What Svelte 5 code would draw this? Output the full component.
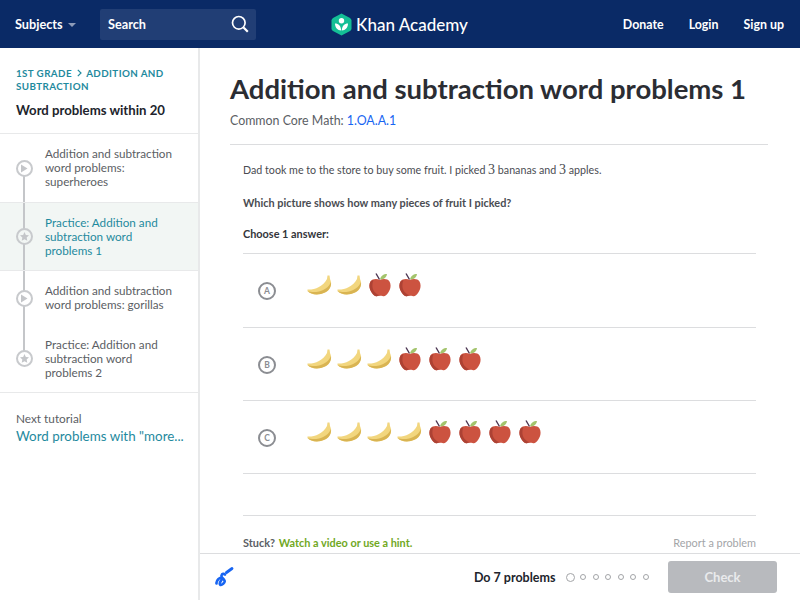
<script lang="ts">
  const lessons = [
    { kind: "video", lines: "Addition and subtraction word problems: superheroes", h: 68 },
    { kind: "star", lines: "Practice: Addition and subtraction word problems 1", h: 69, active: true },
    { kind: "video", lines: "Addition and subtraction word problems: gorillas", h: 54 },
    { kind: "star", lines: "Practice: Addition and subtraction word problems 2", h: 67 },
  ];
  const choices = [
    { letter: "A", bananas: 2, apples: 2 },
    { letter: "B", bananas: 3, apples: 3 },
    { letter: "C", bananas: 4, apples: 4 },
  ];
  const dots = [0, 1, 2, 3, 4, 5, 6];
</script>

{#snippet banana()}
  <span class="cell">
    <svg width="25" height="20" viewBox="0 0 25 20">
      <path d="M.5 14.500C7 15 16 12 20 4L20.500 .5 22.500 .5 23 4C25.500 9 23.500 15 18 17.500 12 20.500 4 20 .5 16z" fill="#f2d67e" />
      <path d="M.5 16C4 20 12 20.500 18 17.500 22.500 15.500 24.500 11 24 7 22 12 17 15.500 12 16.500 7.500 17.500 3.500 17 .5 16z" fill="#d9b452" />
    </svg>
  </span>
{/snippet}

{#snippet apple()}
  <span class="cell">
    <svg class="apple" width="22" height="24" viewBox="0 0 22 24">
      <path d="M7 .5l3.500 6" stroke="#4a3350" stroke-width="1.400" fill="none" />
      <path d="M11 6.500c.5-3.500 3.500-5.500 7-5.500-.5 3.500-3 5.500-7 5.500z" fill="#a3c46c" />
      <path d="M11 7c3-1.500 7.500-1.500 9.500 1.500 2 3.500 1 8-1.500 11.500-1.500 2.500-3.500 3.800-5.500 3-1.500-.5-3.500-.5-5 0C6.500 23.800 4.500 22.500 3 20 .5 16.500-.5 12 1.500 8.500 3.500 5.500 8 5.500 11 7z" fill="#cc5340" />
      <path d="M1.500 8.500C-.5 12 .5 16.500 3 20c1.500 2.500 3.500 3.800 5.500 3 1-.3 2-.4 3-.4-4-1-7.500-4-8-8.500-.2-2.500 0-4.500 1-7-1.200.4-2.200 1.100-3 1.400z" fill="#ad4234" />
    </svg>
  </span>
{/snippet}

<div class="page">
  <header class="topbar">
    <div class="left">
      <span class="subjects">Subjects <i class="caret"></i></span>
      <div class="search">
        <span>Search</span>
        <svg width="18" height="18" viewBox="0 0 18 18" fill="none" stroke="#fff" stroke-width="1.700">
          <circle cx="7.800" cy="7.800" r="6.300" />
          <path d="M12.500 12.500l4.300 4.300" stroke-width="2.200" />
        </svg>
      </div>
    </div>
    <div class="logo">
      <svg width="21" height="23" viewBox="0 0 21 23">
        <path d="M10.500 .5l8.500 4.500q1.500 1 1.500 2.500v8q0 1.500-1.500 2.500l-8.500 4.500-8.500-4.500q-1.500-1-1.500-2.500v-8q0-1.500 1.500-2.500z" fill="#14bf96" />
        <circle cx="10.500" cy="7.800" r="2.700" fill="#fff" />
        <path d="M4 10.500c3.500 0 6 2.500 6.200 7-3.700-.2-6.200-3-6.200-7zM17 10.500c-3.500 0-6 2.500-6.200 7 3.700-.2 6.200-3 6.200-7z" fill="#fff" />
      </svg>
      <span>Khan Academy</span>
    </div>
    <nav class="right">
      <span>Donate</span>
      <span>Login</span>
      <span>Sign up</span>
    </nav>
  </header>

  <div class="body">
    <aside class="sidebar">
      <div class="side-head">
        <div class="crumb">
          1st grade
          <svg class="chev" width="5" height="8" viewBox="0 0 5 8" fill="none" stroke="#1f8a9e" stroke-width="1.200"><path d="M.8 .8L4 4 .8 7.200" /></svg>
          Addition and
        </div>
        <div class="crumb">subtraction</div>
        <div class="side-title">Word problems within 20</div>
      </div>
      <ul class="lessons">
        {#each lessons as lesson, i}
          <li class:active={lesson.active} style="height: {lesson.h}px">
            <div class="rail" class:first={i === 0} class:last={i === lessons.length - 1}>
              <span class="node">
                {#if lesson.kind === "video"}
                  <svg width="8" height="9" viewBox="0 0 8 9"><path d="M1 .5l6.500 4-6.500 4z" fill="#c4c6c9" /></svg>
                {:else}
                  <svg width="9" height="9" viewBox="0 0 10 10"><path d="M5 0l1.500 3.300 3.500.4-2.600 2.400.7 3.600L5 8l-3.100 1.700.7-3.600L0 3.700l3.500-.4z" fill="#c4c6c9" /></svg>
                {/if}
              </span>
            </div>
            <span class="lesson-text">{lesson.lines}</span>
          </li>
        {/each}
      </ul>
      <div class="next">
        <div class="next-label">Next tutorial</div>
        <div class="next-link">Word problems with "more...</div>
      </div>
    </aside>

    <main class="main">
      <div class="scroll">
        <h1>Addition and subtraction word problems 1</h1>
        <p class="standard">Common Core Math: <span class="link">1.OA.A.1</span></p>
        <div class="exercise">
          <p class="q1">Dad took me to the store to buy some fruit. I picked <span class="num">3</span> bananas and <span class="num">3</span> apples.</p>
          <p class="q2">Which picture shows how many pieces of fruit I picked?</p>
          <p class="q3">Choose 1 answer:</p>
          <div class="choices">
            {#each choices as c}
              <div class="choice">
                <span class="letter">{c.letter}</span>
                <div class="fruits">
                  {#each Array(c.bananas) as _}
                    {@render banana()}
                  {/each}
                  {#each Array(c.apples) as _}
                    {@render apple()}
                  {/each}
                </div>
              </div>
            {/each}
          </div>
          <div class="stuck">
            <span><b>Stuck?</b> <b class="hint">Watch a video or use a hint.</b></span>
            <span class="report">Report a problem</span>
          </div>
        </div>
      </div>
      <footer class="footer">
        <svg class="scratch" width="20" height="20" viewBox="0 0 20 20" fill="none" stroke="#1865f2" stroke-linecap="round" stroke-linejoin="round">
          <path d="M12.500 5.500l5.500-4" stroke-width="2.800" />
          <path d="M2.500 16.500C2 13.500 6 10 7.500 11 9 12.500 4.500 15.500 6 17.500 7.500 19 11.500 15.500 10.500 13.500 9.500 11.500 7 10.500 7.500 8.500 8 6.500 10 6.500 11 7.500" stroke-width="2.600" />
        </svg>
        <div class="progress">
          <span class="do">Do 7 problems</span>
          <div class="dots">
            {#each dots as d}
              <i class="dot" class:current={d === 0}></i>
            {/each}
          </div>
          <button class="check">Check</button>
        </div>
      </footer>
    </main>
  </div>
</div>

<style>
  :global(body) {
    margin: 0;
    font-family: Lato, "Liberation Sans", sans-serif;
    background: #fff;
  }

  .page {
    width: 800px;
    height: 600px;
    overflow: hidden;
    display: flex;
    flex-direction: column;
    color: #21242c;
  }

  .topbar {
    height: 48px;
    flex: none;
    background: #0a2a66;
    color: #fff;
    display: grid;
    grid-template-columns: 1fr auto 1fr;
    align-items: center;
    padding: 0 16px 0 15px;
    font-size: 12.700px;
    font-weight: 700;
  }

  .left {
    display: flex;
    align-items: center;
    gap: 24px;
  }

  .subjects {
    display: flex;
    align-items: center;
    gap: 5px;
    width: 61px;
    white-space: nowrap;
  }

  .caret {
    flex: none;
    width: 0;
    height: 0;
    border-left: 4px solid transparent;
    border-right: 4px solid transparent;
    border-top: 4px solid #8d9bb8;
    margin-top: 2px;
  }

  .search {
    width: 156px;
    height: 31px;
    box-sizing: border-box;
    background: #213e75;
    border-radius: 2px;
    display: flex;
    align-items: center;
    justify-content: space-between;
    padding: 0 7px 0 8px;
  }

  .logo {
    display: flex;
    align-items: center;
    gap: 4px;
    font-size: 17px;
    font-weight: 500;
  }

  .right {
    display: flex;
    justify-content: flex-end;
    gap: 25px;
    font-size: 12.400px;
  }

  .body {
    flex: 1;
    display: flex;
    min-height: 0;
  }

  .sidebar {
    width: 198px;
    flex: none;
    border-right: 2px solid #e8e9ea;
  }

  .side-head {
    height: 86px;
    box-sizing: border-box;
    padding: 19px 15px 0 16px;
    border-bottom: 1px solid #e8e9ea;
  }

  .crumb {
    font-size: 9.800px;
    line-height: 13px;
    font-weight: 700;
    text-transform: uppercase;
    letter-spacing: 0.4px;
    color: #1f8a9e;
  }

  .chev {
    margin: 0 2px;
  }

  .side-title {
    margin-top: 7px;
    font-size: 13.200px;
    line-height: 20px;
    font-weight: 700;
    white-space: nowrap;
  }

  .lessons {
    list-style: none;
    margin: 0;
    padding: 0;
    border-bottom: 1px solid #e8e9ea;
  }

  .lessons li {
    display: flex;
    align-items: center;
    box-sizing: border-box;
    font-size: 11.700px;
    line-height: 14px;
    color: #5b5e64;
  }

  .lessons li.active {
    background: #f2f6f4;
    border-top: 1px solid #e8e9ea;
    border-bottom: 1px solid #e8e9ea;
    color: #1f8a9e;
  }

  .rail {
    width: 45px;
    flex: none;
    align-self: stretch;
    display: flex;
    align-items: center;
    justify-content: center;
    padding-left: 3px;
    box-sizing: border-box;
    position: relative;
  }

  .rail::before {
    content: "";
    position: absolute;
    left: 23px;
    top: 0;
    bottom: 0;
    width: 2px;
    background: #c4c6c9;
  }

  .rail.first::before {
    top: 50%;
  }

  .rail.last::before {
    bottom: 50%;
  }

  .node {
    position: relative;
    width: 13px;
    height: 13px;
    border: 2px solid #c8cacd;
    border-radius: 50%;
    background: #fff;
    display: flex;
    align-items: center;
    justify-content: center;
  }

  .active .node {
    background: #f2f6f4;
  }

  .lesson-text {
    width: 130px;
    margin-top: -2px;
  }

  .next {
    padding: 18px 0 0 16px;
  }

  .next-label {
    font-size: 11.800px;
    line-height: 16px;
    color: #5b5e64;
  }

  .next-link {
    font-size: 13.400px;
    line-height: 18px;
    color: #1f8a9e;
    white-space: nowrap;
  }

  .main {
    flex: 1;
    min-width: 0;
    display: flex;
    flex-direction: column;
  }

  .scroll {
    flex: 1;
    min-height: 0;
    overflow: hidden;
    padding: 0 32px 0 30px;
  }

  h1 {
    margin: 24px 0 0;
    font-size: 27.500px;
    line-height: 34px;
    font-weight: 700;
    color: #2b2d33;
    white-space: nowrap;
  }

  .standard {
    margin: 6px 0 0;
    font-size: 12.400px;
    line-height: 18px;
    color: #5b5e64;
    padding-bottom: 14px;
    border-bottom: 1px solid #dcdddf;
  }

  .link {
    color: #1865f2;
  }

  .exercise {
    padding: 0 12px 0 13px;
    font-size: 10.900px;
    color: #4a4c52;
  }

  .q1 {
    margin: 17px 0 0;
    line-height: 16px;
    font-size: 10.700px;
  }

  .num {
    font-family: "Liberation Serif", serif;
    font-size: 14px;
  }

  .q2 {
    margin: 17px 0 0;
    line-height: 16px;
    font-weight: 700;
  }

  .q3 {
    margin: 15px 0 0;
    line-height: 16px;
    font-weight: 700;
    color: #33353a;
  }

  .choices {
    margin-top: 11px;
    border-top: 1px solid #dcdddf;
    border-bottom: 1px solid #dcdddf;
  }

  .choice {
    height: 73px;
    display: flex;
    box-sizing: border-box;
  }

  .choice + .choice {
    border-top: 1px solid #dcdddf;
  }

  .letter {
    flex: none;
    width: 14px;
    height: 14px;
    border: 2px solid #8b8d92;
    border-radius: 50%;
    font-size: 8.500px;
    font-weight: 700;
    color: #8b8d92;
    display: flex;
    align-items: center;
    justify-content: center;
    margin: 27.500px 0 0 15px;
  }

  .fruits {
    display: flex;
    margin: 18px 0 0 31px;
    height: 26px;
  }

  .cell {
    width: 30px;
    flex: none;
    display: flex;
    align-items: center;
  }

  .apple {
    margin-left: 2px;
  }

  .stuck {
    margin-top: 41px;
    padding-top: 19px;
    border-top: 1px solid #dcdddf;
    display: flex;
    justify-content: space-between;
    line-height: 16px;
    color: #5b5e64;
  }

  .hint {
    color: #71a81e;
    margin-left: 1px;
  }

  .report {
    color: #a3a5a8;
  }

  .footer {
    height: 47px;
    flex: none;
    box-sizing: border-box;
    border-top: 1px solid #dcdddf;
    display: flex;
    align-items: center;
    justify-content: space-between;
    padding: 0 23px 0 14px;
  }

  .progress {
    display: flex;
    align-items: center;
  }

  .do {
    font-size: 12.500px;
    font-weight: 700;
  }

  .dots {
    display: flex;
    align-items: center;
    gap: 6.600px;
    margin: 0 19px 0 11px;
  }

  .dot {
    width: 4px;
    height: 4px;
    border: 1px solid #a3a5a8;
    border-radius: 50%;
  }

  .dot.current {
    width: 7px;
    height: 7px;
    margin-right: -2px;
  }

  .check {
    width: 109px;
    height: 32px;
    border: none;
    border-radius: 3px;
    background: #b8babe;
    color: #e9eaec;
    font-family: inherit;
    font-size: 13px;
    font-weight: 700;
  }
</style>
